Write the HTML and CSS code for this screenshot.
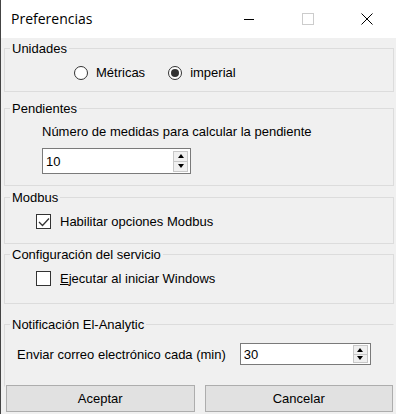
FILE: index.html
```html
<!DOCTYPE html>
<html lang="es">
<head>
    <meta charset="UTF-8">
    <title>Preferencias</title>
    <link rel="stylesheet" href="styles.css">
</head>
<body>

    <div class="window">
        <div class="titlebar">
            <span class="title">Preferencias</span>
            <div class="controls">
                <span class="ctl"><svg width="12" height="12" viewBox="0 0 12 12"><line x1="1" y1="6.5" x2="11" y2="6.5" stroke="#000" stroke-width="1"/></svg></span>
                <span class="ctl"><svg width="12" height="12" viewBox="0 0 12 12"><rect x="0.5" y="0.5" width="11" height="11" fill="none" stroke="#ccc" stroke-width="1"/></svg></span>
                <span class="ctl"><svg width="12" height="12" viewBox="0 0 12 12"><path d="M0.5 0.5 L11.5 11.5 M11.5 0.5 L0.5 11.5" stroke="#000" stroke-width="1"/></svg></span>
            </div>
        </div>

        <div class="content">
            <fieldset class="group g-units">
                <legend>Unidades</legend>
                <div class="radios">
                    <label class="radio"><span class="dot"></span>Métricas</label>
                    <label class="radio"><span class="dot checked"></span>imperial</label>
                </div>
            </fieldset>

            <fieldset class="group g-slope">
                <legend>Pendientes</legend>
                <div class="slope-inner">
                    <div class="slope-label">Número de medidas para calcular la pendiente</div>
                    <div class="spin spin-slope">
                        <span class="spin-value">10</span>
                        <span class="spin-btns">
                            <span class="arrow up"></span>
                            <span class="arrow down"></span>
                        </span>
                    </div>
                </div>
            </fieldset>

            <fieldset class="group g-modbus">
                <legend>Modbus</legend>
                <label class="check">
                    <span class="box"><svg width="12" height="10" viewBox="0 0 12 10"><path d="M1 5 L4.5 8.5 L11 1.5" fill="none" stroke="#333" stroke-width="1.3"/></svg></span>
                    Habilitar opciones Modbus
                </label>
            </fieldset>

            <fieldset class="group g-service">
                <legend>Configuración del servicio</legend>
                <label class="check">
                    <span class="box"></span>
                    <span><u>E</u>jecutar al iniciar Windows</span>
                </label>
            </fieldset>

            <fieldset class="group g-notify">
                <legend>Notificación El-Analytic</legend>
                <div class="notify-row">
                    <span>Enviar correo electrónico cada (min)</span>
                    <div class="spin spin-notify">
                        <span class="spin-value">30</span>
                        <span class="spin-btns">
                            <span class="arrow up"></span>
                            <span class="arrow down"></span>
                        </span>
                    </div>
                </div>
            </fieldset>

            <div class="buttons">
                <button type="button">Aceptar</button>
                <button type="button">Cancelar</button>
            </div>
        </div>
    </div>

</body>
</html>
```

FILE: styles.css
```css
* {
    margin: 0;
    padding: 0;
    box-sizing: border-box;
}

body {
    font-family: "Liberation Sans", Arial, sans-serif;
    font-size: 13px;
    color: #000;
    background-color: #f0f0f0;
}

.window {
    width: 396px;
    height: 414px;
    background-color: #f0f0f0;
    border-left: 1px solid #444;
    overflow: hidden;
}

.titlebar {
    height: 38px;
    background-color: #fff;
    display: flex;
    align-items: center;
    justify-content: space-between;
}

.title {
    font-family: "Open Sans", sans-serif;
    font-size: 14px;
    padding-left: 10px;
    margin-top: -1px;
}

.controls {
    display: flex;
}

.ctl {
    width: 59px;
    display: flex;
    justify-content: center;
    align-items: center;
}

.content {
    padding: 3px 2px 0 3px;
}

.group {
    border: 1px solid #dcdcdc;
    border-radius: 0;
    padding: 0;
}

.group legend {
    margin-left: 5px;
    padding: 0 2px;
    color: #000;
    line-height: 15px;
}

/* Unidades */
.g-units {
    height: 51px;
}

.radios {
    display: flex;
    gap: 23px;
    margin-left: 69px;
    padding-top: 9px;
}

.radio {
    display: flex;
    align-items: center;
    gap: 8px;
}

.dot {
    width: 14px;
    height: 14px;
    border: 1px solid #333;
    border-radius: 50%;
    background-color: #fff;
    position: relative;
}

.dot.checked::after {
    content: "";
    position: absolute;
    left: 2px;
    top: 2px;
    width: 8px;
    height: 8px;
    border-radius: 50%;
    background-color: #333;
}

/* Pendientes */
.g-slope {
    margin-top: 9px;
    height: 85px;
}

.slope-inner {
    margin-left: 37px;
    padding-top: 8px;
}

.spin {
    display: flex;
    align-items: center;
    justify-content: space-between;
    background-color: #fff;
    border: 1px solid #7a7a7a;
    height: 26px;
}

.spin-slope {
    width: 149px;
    margin-top: 9px;
}

.spin-value {
    padding-left: 3px;
}

.spin-btns {
    display: flex;
    flex-direction: column;
    width: 15px;
    height: 21px;
    margin-right: 2px;
    border: 1px solid #c8c8c8;
    background-color: #f0f0f0;
}

.arrow {
    flex: 1;
    display: flex;
    justify-content: center;
    align-items: center;
}

.arrow.up {
    border-bottom: 1px solid #c8c8c8;
}

.arrow.up::before {
    content: "";
    border-left: 3.5px solid transparent;
    border-right: 3.5px solid transparent;
    border-bottom: 4px solid #000;
}

.arrow.down::before {
    content: "";
    border-left: 3.5px solid transparent;
    border-right: 3.5px solid transparent;
    border-top: 4px solid #000;
}

/* Modbus / servicio */
.g-modbus {
    margin-top: 4px;
    height: 54px;
}

.check {
    display: flex;
    align-items: center;
    gap: 9px;
    margin-left: 31px;
    padding-top: 9px;
}

.box {
    width: 15px;
    height: 15px;
    border: 1px solid #333;
    background-color: #fff;
    display: flex;
    justify-content: center;
    align-items: center;
}

.g-service {
    margin-top: 3px;
    height: 57px;
}

/* Notificacion */
.g-notify {
    margin-top: 13px;
    height: 70px;
    border-bottom-color: transparent;
    border-right-color: transparent;
}

.notify-row {
    display: flex;
    align-items: center;
    gap: 14px;
    margin-left: 12px;
    padding-top: 11px;
}

.spin-notify {
    width: 131px;
    height: 22px;
}

.spin-notify .spin-btns {
    height: 18px;
}

.buttons {
    display: flex;
    gap: 10px;
    padding: 0 1px 0 2px;
    margin-top: -2px;
}

.buttons button {
    flex: 1;
    height: 27px;
    font-family: "Liberation Sans", Arial, sans-serif;
    font-size: 13px;
    color: #000;
    background-color: #e1e1e1;
    border: 1px solid #adadad;
}
```
